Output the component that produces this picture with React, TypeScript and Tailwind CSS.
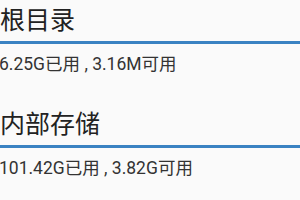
export default function App() {
  const items = [
    { title: "根目录", sub: "6.25G已用 , 3.16M可用" },
    { title: "内部存储", sub: "101.42G已用 , 3.82G可用" },
  ];
  return (
    <div
      className="w-[300px] h-[200px] overflow-hidden bg-[#fafafa]"
      style={{ fontFamily: 'Roboto, "Noto Sans CJK SC", sans-serif' }}
    >
      {items.map((it, i) => (
        <div key={i} className="h-[104px] flex flex-col">
          <div className="h-[40px] flex items-center text-[25px] leading-none text-[#222222] pt-[1px]">
            {it.title}
          </div>
          <div className="h-[3px] bg-[#3a82c2] mt-[1px]" />
          <div className="mt-[12px] text-[17.5px] leading-none text-[#333333] ml-[-1px]">
            {it.sub}
          </div>
        </div>
      ))}
    </div>
  );
}
